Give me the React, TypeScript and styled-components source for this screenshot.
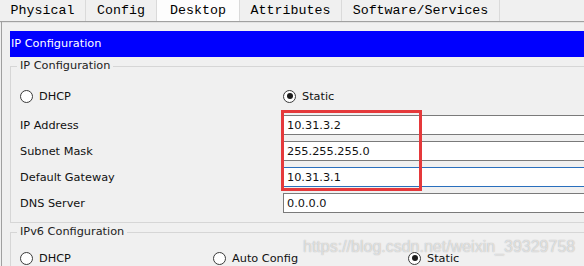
import styled, { createGlobalStyle } from 'styled-components';

const GlobalStyle = createGlobalStyle`
  html, body {
    margin: 0;
    padding: 0;
    background: #f0f0f0;
    overflow: hidden;
  }
  body {
    font-family: "DejaVu Sans", Verdana, sans-serif;
    font-size: 11.3px;
    color: #111;
  }
`;

const tabs = [
  { name: 'Physical', width: 86 },
  { name: 'Config', width: 71 },
  { name: 'Desktop', width: 83, active: true },
  { name: 'Attributes', width: 102 },
  { name: 'Software/Services', width: 158 },
];

const Radio = ({ label, checked }: { label: string; checked?: boolean }) => (
  <RadioItem>
    <RadioCircle $checked={checked} />
    <span>{label}</span>
  </RadioItem>
);

const App: React.FC = () => {
  return (
    <Page>
      <GlobalStyle />
      <TabBar>
        {tabs.map((t) => (
          <Tab key={t.name} $width={t.width} $active={t.active}>
            {t.name}
          </Tab>
        ))}
      </TabBar>
      <Panel>
        <TitleBar>IP Configuration</TitleBar>
        <Group $top={13} $bottom={9}>
          <Legend>IP Configuration</Legend>
          <FormGrid>
            <Radio label="DHCP" />
            <Radio label="Static" checked />
            <Label>IP Address</Label>
            <Field>10.31.3.2</Field>
            <Label>Subnet Mask</Label>
            <Field>255.255.255.0</Field>
            <Label>Default Gateway</Label>
            <Field $focused>10.31.3.1</Field>
            <Label>DNS Server</Label>
            <Field>0.0.0.0</Field>
          </FormGrid>
        </Group>
        <Group $top={9} $bottom={8}>
          <Legend>IPv6 Configuration</Legend>
          <V6Row>
            <Radio label="DHCP" />
            <Radio label="Auto Config" />
            <Radio label="Static" checked />
          </V6Row>
        </Group>
      </Panel>
      <Highlight />
      <Watermark>https://blog.csdn.net/weixin_39329758</Watermark>
    </Page>
  );
};

const Page = styled.div`
  position: relative;
  width: 640px;
  height: 266px;
  overflow: hidden;
`;

const TabBar = styled.div`
  display: flex;
  height: 21px;
  border-bottom: 1px solid #a0a0a0;
  box-shadow: 0 1px 0 #e2e2e2;
`;

const Tab = styled.div<{ $width: number; $active?: boolean }>`
  width: ${(p) => p.$width}px;
  box-sizing: border-box;
  border-right: 1px solid #dadada;
  background: ${(p) => (p.$active ? '#fdfdfd' : '#f0f0f0')};
  font-family: "Liberation Mono", "DejaVu Sans Mono", monospace;
  font-size: 13.3px;
  line-height: 22px;
  text-align: center;
  color: #000;
`;

const Panel = styled.div`
  margin-left: 1px;
  border-left: 1px solid #a0a0a0;
  padding: 9px 0 0 8px;
  min-height: 300px;
`;

const TitleBar = styled.div`
  height: 26px;
  line-height: 26px;
  background: #0000ff;
  color: #fff;
  padding-left: 1px;
`;

const Group = styled.fieldset<{ $top: number; $bottom: number }>`
  margin: 2px 0 0 0;
  padding: ${(p) => p.$top}px 9px ${(p) => p.$bottom}px 9px;
  border: 1px solid #d6d6d6;
  min-inline-size: 0;
`;

const Legend = styled.legend`
  margin-left: -3px;
  padding: 0 3px;
  line-height: 14px;
  color: #222;
`;

const FormGrid = styled.div`
  display: grid;
  grid-template-columns: 263px 1fr;
  grid-template-rows: 23px repeat(4, 20px);
  row-gap: 6px;
`;

const V6Row = styled.div`
  display: grid;
  grid-template-columns: 193px 195px 1fr;
  height: 20px;
`;

const RadioItem = styled.div`
  display: flex;
  align-items: center;
  gap: 6px;
  height: 20px;
`;

const RadioCircle = styled.span<{ $checked?: boolean }>`
  width: 13px;
  height: 13px;
  box-sizing: border-box;
  border: 1px solid #3a3a3a;
  border-radius: 50%;
  background: #fff;
  display: flex;
  align-items: center;
  justify-content: center;

  &::after {
    content: '';
    display: ${(p) => (p.$checked ? 'block' : 'none')};
    width: 6px;
    height: 6px;
    border-radius: 50%;
    background: #1c1c1c;
  }
`;

const Label = styled.div`
  display: flex;
  align-items: center;
  height: 20px;
`;

const Field = styled.div<{ $focused?: boolean }>`
  height: 20px;
  box-sizing: border-box;
  border: 1px solid ${(p) => (p.$focused ? '#2a6fbd' : '#7a7a7a')};
  background: #fff;
  padding-left: 3px;
  display: flex;
  align-items: center;
  color: #111;
`;

const Highlight = styled.div`
  position: absolute;
  left: 281px;
  top: 110px;
  width: 141px;
  height: 81px;
  box-sizing: border-box;
  border: 3px solid #e5393b;
  pointer-events: none;
`;

const Watermark = styled.div`
  position: absolute;
  left: 303px;
  top: 237px;
  font-family: "Liberation Sans", Arial, sans-serif;
  font-size: 16px;
  line-height: 20px;
  color: rgba(255, 255, 255, 0.6);
  text-shadow: 0 0 1px rgba(110, 110, 110, 0.6);
  white-space: nowrap;
  pointer-events: none;
`;

export default App;
